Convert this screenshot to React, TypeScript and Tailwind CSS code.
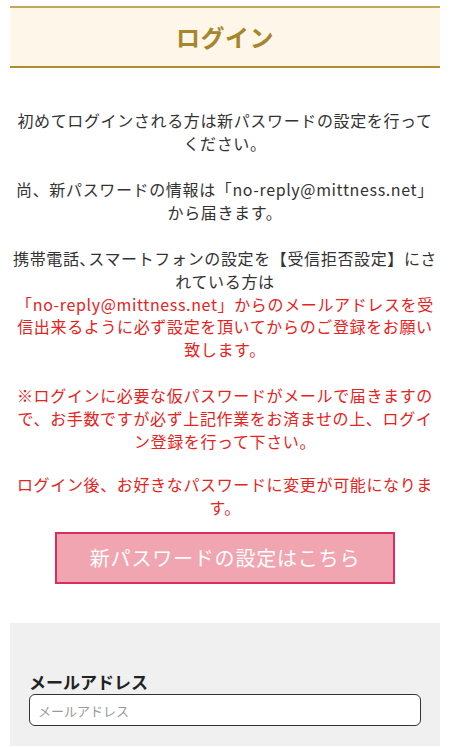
import React from 'react';

const font = { fontFamily: '"Noto Sans CJK JP", "Noto Sans", sans-serif' };

const App: React.FC = () => {
  return (
    <div className="w-[450px] min-h-[748px] bg-white px-[10px] pt-[6px]" style={font}>
      <div className="h-[62px] bg-[#fdf6e9] border-t-2 border-b-2 border-t-[#c4a858] border-b-[#b08c2c] flex items-center justify-center">
        <h1 className="text-[24px] font-bold text-[#a8852a] leading-none tracking-[0.02em]">ログイン</h1>
      </div>

      <div className="mt-[41px] text-center text-[16px] leading-[22.6px] tracking-[0.04em] text-[#333]">
        <p>初めてログインされる方は新パスワードの設定を行ってください。</p>
        <p className="mt-[24px]">
          尚、新パスワードの情報は「no-reply@mittness.net」
          <br />
          から届きます。
        </p>
        <p className="mt-[24px]">
          携帯電話､スマートフォンの設定を【受信拒否設定】にされている方は
          <br />
          <span className="text-[#e8221c]">
            「no-reply@mittness.net」からのメールアドレスを受信出来るように必ず設定を頂いてからのご登録をお願い致します。
          </span>
        </p>
        <p className="mt-[24px] text-[#e8221c]">
          ※ログインに必要な仮パスワードがメールで届きますので、お手数ですが必ず上記作業をお済ませの上、ログイン登録を行って下さい。
        </p>
        <p className="mt-[21px] text-[#e8221c]">ログイン後、お好きなパスワードに変更が可能になります。</p>
      </div>

      <div className="mt-[14px] flex justify-center">
        <button className="w-[340px] h-[52px] bg-[#f1a5b1] border-2 border-[#d92f60] text-white text-[20px] tracking-[0.04em]">
          新パスワードの設定はこちら
        </button>
      </div>

      <div className="mt-[39px] bg-[#f0f0f0] px-[19px] pt-[47px] pb-[20px]">
        <label className="block text-[17px] font-bold text-[#222] leading-[24px]">メールアドレス</label>
        <input
          type="text"
          placeholder="メールアドレス"
          className="block w-full h-[32px] bg-white border border-[#333] rounded-[6px] px-[8px] text-[13px] placeholder:text-[#999] outline-none"
        />
      </div>
    </div>
  );
};

export default App;
